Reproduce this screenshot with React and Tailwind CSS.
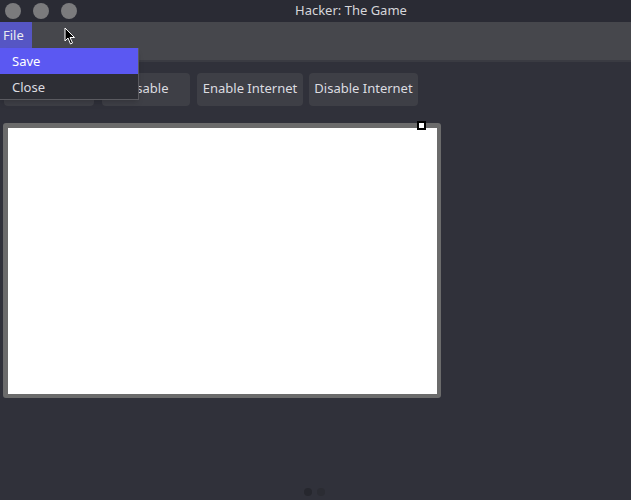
import React from 'react';

function TitleBar() {
  return (
    <div className="relative flex h-[22px] items-center bg-[#2a2b34]">
      <div className="flex gap-[12px] pl-[5px]">
        <span className="h-[16px] w-[16px] rounded-full bg-[#7b7b7d]" />
        <span className="h-[16px] w-[16px] rounded-full bg-[#7b7b7d]" />
        <span className="h-[16px] w-[16px] rounded-full bg-[#7b7b7d]" />
      </div>
      <div className="ml-[218px] text-[13px] text-[#d6d6da]">Hacker: The Game</div>
    </div>
  );
}

function Cursor() {
  return (
    <svg className="absolute left-[64px] top-[27px]" width="13" height="19" viewBox="0 0 13 19">
      <path d="M1 1 L1 14 L4 11 L6.5 17 L8.5 16 L6 10.5 L10.5 10.5 Z" fill="#000" stroke="#fff" strokeWidth="1" />
    </svg>
  );
}

function App() {
  const buttons = [
    { label: 'Enable', cls: 'w-[90px]' },
    { label: 'Disable', cls: 'ml-[8px] w-[88px]' },
    { label: 'Enable Internet', cls: 'ml-[7px] w-[106px]' },
    { label: 'Disable Internet', cls: 'ml-[6px] w-[109px]' },
  ];

  return (
    <div
      className="relative h-[500px] w-[631px] overflow-hidden bg-[#30313a] text-[13px] text-[#dcdce0]"
      style={{ fontFamily: '"Noto Sans", "Open Sans", sans-serif' }}
    >
      <TitleBar />

      {/* menu bar */}
      <div className="h-[40px] border-b-[2px] border-[#3a3b42] bg-[#46474c]">
        <div className="flex h-[26px] w-[32px] items-center bg-[#5656c4] pl-[3px] pt-[2px] text-[#eaeaf0]">File</div>
      </div>

      {/* toolbar */}
      <div className="flex pl-[4px] pt-[11px]">
        {buttons.map((b) => (
          <button
            key={b.label}
            className={`flex h-[33px] items-center justify-center rounded-[4px] bg-[#3e3f46] pb-[2px] ${b.cls} text-[#dcdce0]`}
          >
            {b.label}
          </button>
        ))}
      </div>

      {/* canvas */}
      <div className="relative ml-[3px] mt-[17px] h-[275px] w-[438px] rounded-[3px] bg-[#6b6b6b] p-[5px] pb-[4px] pr-[4px]">
        <div className="h-full w-full bg-white" />
        <div className="absolute left-[414px] top-[-2px] h-[9px] w-[9px] border-2 border-black bg-white" />
      </div>

      {/* bottom dots */}
      <div className="absolute bottom-[4px] left-[304px] flex gap-[5px]">
        <span className="h-[8px] w-[8px] rounded-full bg-[#26272e]" />
        <span className="h-[8px] w-[8px] rounded-full bg-[#2b2c33]" />
      </div>

      {/* dropdown menu */}
      <div className="absolute left-0 top-[48px] w-[139px] border-r border-b border-[#5a5a60] bg-[#2d2e35] shadow-md">
        <div className="flex h-[26px] items-center bg-[#5b58f2] pl-[12px] pt-[2px] text-white">Save</div>
        <div className="flex h-[25px] items-center pl-[12px] pt-[2px] text-[#dcdce0]">Close</div>
      </div>

      <Cursor />
    </div>
  );
}

export default App;
